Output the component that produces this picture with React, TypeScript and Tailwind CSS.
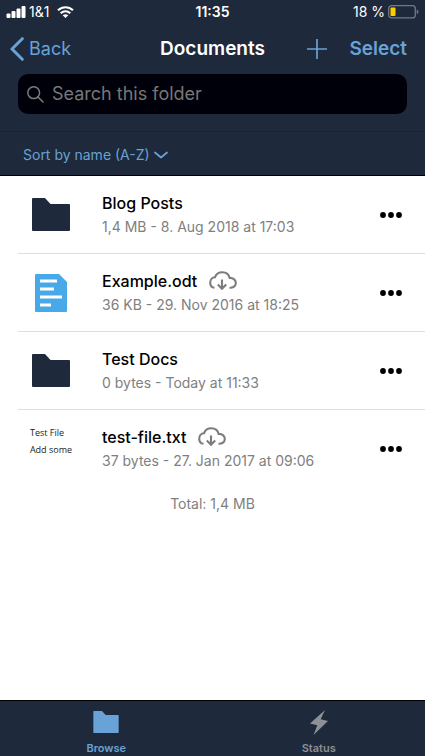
type Entry = {
  name: string;
  details: string;
  kind: "folder" | "document" | "text";
  remote?: boolean;
};

const entries: Entry[] = [
  { name: "Blog Posts", details: "1,4 MB - 8. Aug 2018 at 17:03", kind: "folder" },
  { name: "Example.odt", details: "36 KB - 29. Nov 2016 at 18:25", kind: "document", remote: true },
  { name: "Test Docs", details: "0 bytes - Today at 11:33", kind: "folder" },
  { name: "test-file.txt", details: "37 bytes - 27. Jan 2017 at 09:06", kind: "text", remote: true },
];

function FolderIcon({ className }: { className: string }) {
  return (
    <svg viewBox="0 0 38 33" className={className} fill="currentColor" aria-hidden="true">
      <path d="M0 1Q0 0 1 0H13L18.500 6H37Q38 6 38 7V32Q38 33 37 33H1Q0 33 0 32Z" />
    </svg>
  );
}

function DocumentIcon() {
  return (
    <svg viewBox="0 0 32 38" className="h-[38px] w-8" aria-hidden="true">
      <path d="M0 1Q0 0 1 0H24L32 8V37Q32 38 31 38H1Q0 38 0 37Z" fill="#47a9e8" />
      <path d="M5 7H22M5 15H19M5 23H27M5 31H16" stroke="#fff" strokeWidth="3" />
    </svg>
  );
}

function CloudIcon() {
  return (
    <svg viewBox="0 0 28 20" className="h-5 w-7 shrink-0" fill="none" stroke="#7c7c7c" strokeWidth="2.100" aria-label="Stored on server">
      <path d="M5.500 16.800C2.600 16.400 1.200 14.200 1.200 11.700C1.200 8.600 3.200 6.300 6 6.200C7 3 9.900 1.200 13.400 1.200C17 1.200 19.800 3.500 20.700 6.900C24.500 6.800 26.800 9.200 26.800 11.800C26.800 14.700 24.800 16.600 21.600 16.800H20.500" />
      <path d="M13 8.500V18M8.800 13.600L13 17.800L17.200 13.600" />
    </svg>
  );
}

function Thumbnail({ kind }: { kind: Entry["kind"] }) {
  if (kind === "folder") return <FolderIcon className="h-[33px] w-[38px] text-[#1e293b]" />;
  if (kind === "document") return <DocumentIcon />;
  return (
    <div className="-mt-4 font-['Open_Sans','Noto_Sans',sans-serif] text-[9px] leading-[17px] whitespace-nowrap text-[#222]">
      <p>Test File</p>
      <p>Add some</p>
    </div>
  );
}

function StatusBar() {
  return (
    <div className="flex h-6 items-center px-[6px] text-sm text-white">
      <div className="flex flex-1 items-center">
        <svg viewBox="0 0 20 12" className="h-3 w-5" fill="currentColor" aria-hidden="true">
          <rect x="0.500" y="7.500" width="4" height="4.500" rx="1" />
          <rect x="5.500" y="5" width="4" height="7" rx="1" />
          <rect x="10.500" y="2.500" width="4" height="9.500" rx="1" />
          <rect x="15.500" y="0" width="4" height="12" rx="1" />
        </svg>
        <span className="ml-[3px]">1&amp;1</span>
        <svg viewBox="0 0 17 12" className="ml-2 h-3 w-[17px]" fill="none" stroke="currentColor" strokeWidth="2.200" aria-hidden="true">
          <path d="M1 4.300C5.300 0.200 11.700 0.200 16 4.300" />
          <path d="M3.700 7.200C6.500 4.700 10.500 4.700 13.300 7.200" />
          <path d="M8.500 12L5.700 9.200C7.400 7.800 9.600 7.800 11.300 9.200Z" fill="currentColor" stroke="none" />
        </svg>
      </div>
      <span className="font-semibold">11:35</span>
      <div className="flex flex-1 items-center justify-end gap-[3px]">
        <span>18 %</span>
        <svg viewBox="0 0 31 14" className="h-[14px] w-[31px]" aria-hidden="true">
          <rect x="0.700" y="0.700" width="26.600" height="12.200" rx="3" fill="none" stroke="#727984" strokeWidth="1.300" />
          <rect x="2.500" y="2.500" width="5" height="8.600" rx="1" fill="#ffcc00" />
          <path d="M28.700 4.500Q30.500 5.200 30.500 6.800T28.700 9.100Z" fill="#727984" />
        </svg>
      </div>
    </div>
  );
}

export default function App() {
  return (
    <div className="flex min-h-screen flex-col bg-white font-['Inter','Liberation_Sans',sans-serif]">
      <header className="border-b border-black bg-[#1e293b] text-[#68a2d6]">
        <StatusBar />
        <div className="flex h-[50px] items-center px-[18px] text-[19px]">
          <div className="flex flex-1">
            <button type="button" className="-ml-2 flex items-center gap-[5px] text-lg">
              <svg viewBox="0 0 14 24" className="h-6 w-[14px]" fill="none" stroke="currentColor" strokeWidth="3" strokeLinecap="round" strokeLinejoin="round" aria-hidden="true">
                <path d="M12.300 1.700L2 12L12.300 22.300" />
              </svg>
              Back
            </button>
          </div>
          <h1 className="font-semibold text-white">Documents</h1>
          <div className="flex flex-1 items-center justify-end gap-[22px]">
            <button type="button" aria-label="Add">
              <svg viewBox="0 0 20 20" className="h-5 w-5" stroke="currentColor" strokeWidth="1.700" aria-hidden="true">
                <path d="M10 0V20M0 10H20" />
              </svg>
            </button>
            <button type="button" className="font-semibold">Select</button>
          </div>
        </div>
        <div className="px-[18px] pb-[17px]">
          <label className="flex h-10 items-center gap-2 rounded-[10px] bg-[#00000b] px-[9px]">
            <svg viewBox="0 0 17 17" className="h-[17px] w-[17px] shrink-0" fill="none" stroke="#7c7c7c" strokeWidth="1.500" strokeLinecap="round" aria-hidden="true">
              <circle cx="6.700" cy="6.700" r="5.900" />
              <path d="M11 11L16 16" />
            </svg>
            <input type="text" aria-label="Search this folder" placeholder="Search this folder" className="min-w-0 flex-1 bg-transparent text-lg text-white outline-none placeholder:text-[#777]" />
          </label>
        </div>
        <div className="flex h-11 items-center border-t border-[#1a2530] px-[23px] pt-[2px]">
          <button type="button" className="flex items-center gap-1 text-sm">
            Sort by name (A-Z)
            <svg viewBox="0 0 14 8" className="h-2 w-[14px]" fill="none" stroke="currentColor" strokeWidth="1.700" strokeLinecap="round" strokeLinejoin="round" aria-hidden="true">
              <path d="M1 1.500L7 6.500L13 1.500" />
            </svg>
          </button>
        </div>
      </header>

      <main className="flex-1">
        <ul className="pl-[18px]">
          {entries.map((entry) => (
            <li key={entry.name} className="flex h-[78px] items-center border-b border-[#dedede] pr-[23px] last:border-transparent">
              <div className="flex w-[66px] shrink-0 justify-center">
                <Thumbnail kind={entry.kind} />
              </div>
              <div className="ml-[18px] min-w-0 flex-1">
                <div className="flex h-6 items-center gap-3">
                  <h2 className="text-base font-medium text-black">{entry.name}</h2>
                  {entry.remote && <CloudIcon />}
                </div>
                <p className="text-sm leading-6 text-[#808080]">{entry.details}</p>
              </div>
              <button type="button" aria-label={"Actions for " + entry.name}>
                <svg viewBox="0 0 22 6" className="h-[6px] w-[22px]" fill="#000" aria-hidden="true">
                  <circle cx="3" cy="3" r="2.900" />
                  <circle cx="11" cy="3" r="2.900" />
                  <circle cx="19" cy="3" r="2.900" />
                </svg>
              </button>
            </li>
          ))}
        </ul>
        <p className="pt-[6px] text-center text-sm text-[#808080]">Total: 1,4 MB</p>
      </main>

      <nav className="grid h-14 grid-cols-2 border-t border-black bg-[#1e293b] text-[11px] leading-4 font-semibold">
        <button type="button" className="flex flex-col items-center justify-end text-[#68a2d6]">
          <FolderIcon className="mb-[7px] h-[22px] w-[26px]" />
          Browse
        </button>
        <button type="button" className="flex flex-col items-center justify-end text-[#8d9095]">
          <svg viewBox="0 0 18 25" className="mb-[5px] h-[25px] w-[18px]" fill="currentColor" aria-hidden="true">
            <path d="M15 0L0 13.500L7.300 15.200L3.500 25L18 11L10.700 9.300Z" />
          </svg>
          Status
        </button>
      </nav>
    </div>
  );
}
